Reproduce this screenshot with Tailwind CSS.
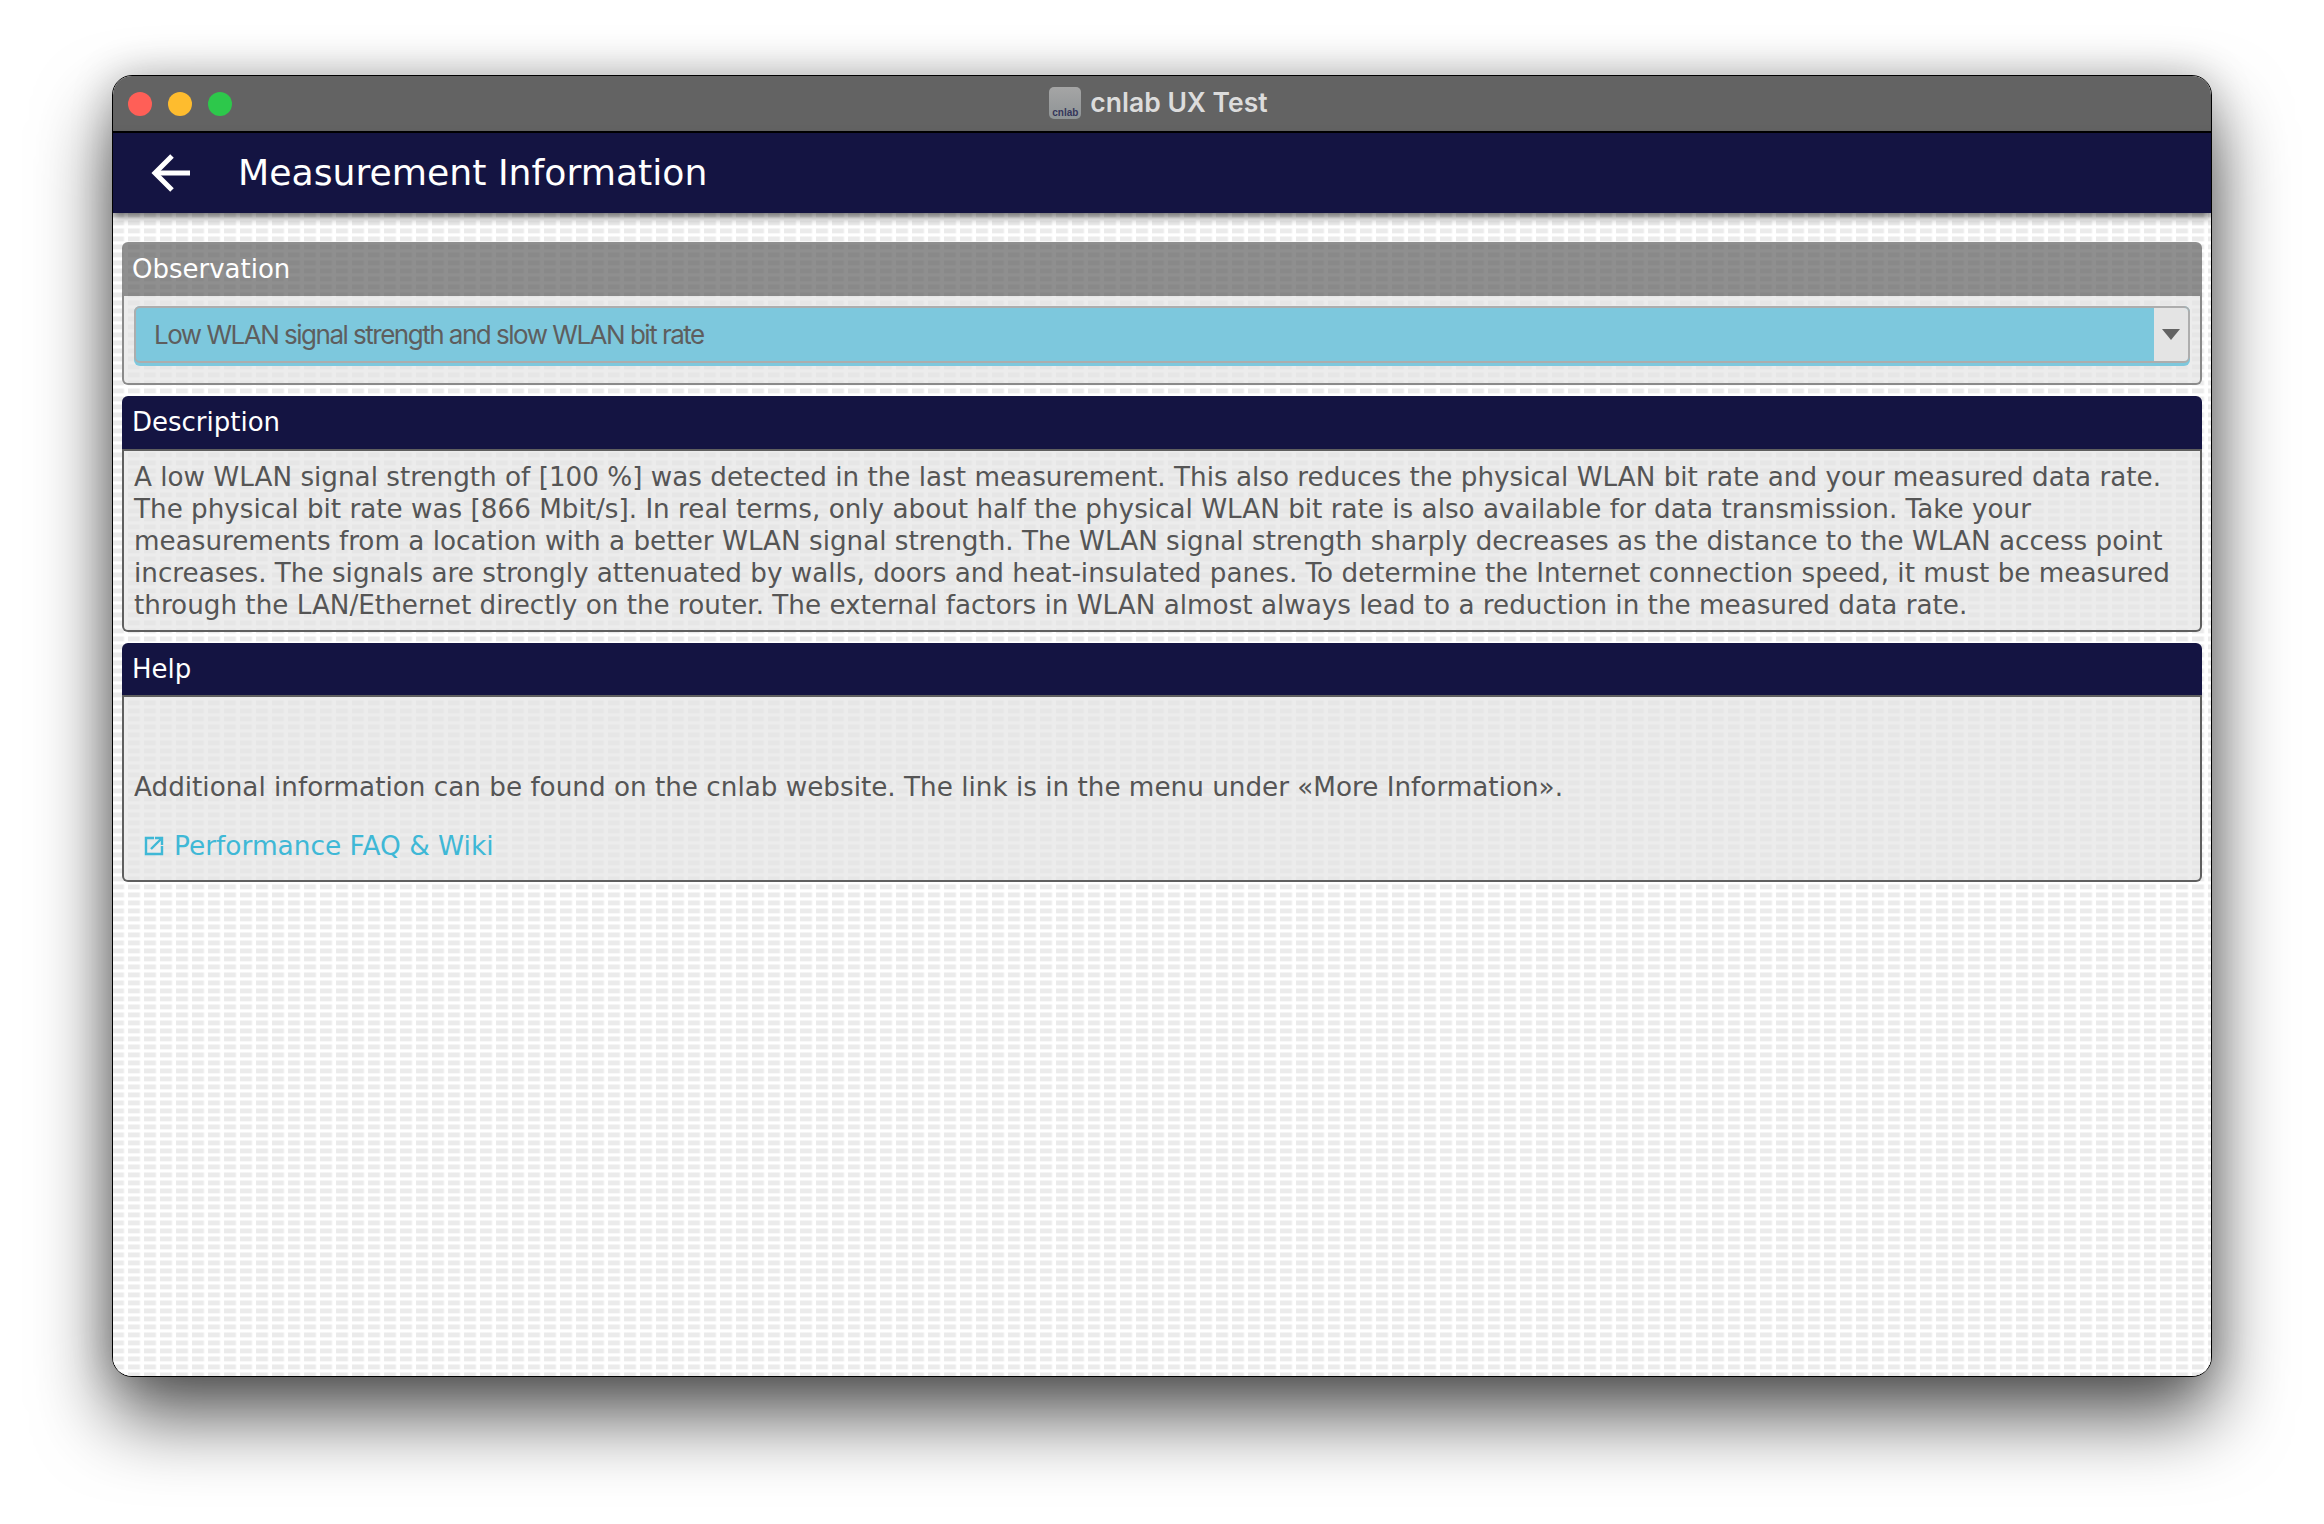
<!DOCTYPE html>
<html lang="en">

<head>
    <meta charset="UTF-8">
    <title>cnlab UX Test</title>
    <script src="https://cdn.jsdelivr.net/npm/@tailwindcss/browser@4"></script>
</head>

<body class="bg-white w-[2324px] h-[1524px] overflow-hidden pt-[75px] pl-[112px] font-['DejaVu_Sans',sans-serif]">

    <!-- Window -->
    <div class="w-[2100px] h-[1302px] rounded-[20px] border border-black overflow-hidden flex flex-col bg-white shadow-[0_40px_76px_rgba(0,0,0,0.66),0_0_40px_rgba(0,0,0,0.22)]">

        <!-- Title bar -->
        <div class="relative h-[57px] shrink-0 bg-[#636363] border-b-2 border-black flex items-center justify-center pr-[7px] pb-[2px]">
            <div class="absolute left-[15px] top-[16px] flex gap-[16px]">
                <span class="w-6 h-6 rounded-full bg-[#ff5f57]"></span>
                <span class="w-6 h-6 rounded-full bg-[#febc2e]"></span>
                <span class="w-6 h-6 rounded-full bg-[#2dc84b]"></span>
            </div>
            <div class="w-8 h-8 rounded-[5px] bg-linear-to-b from-[#a5a5a5] to-[#8f9496] flex items-end justify-center overflow-hidden">
                <span class="font-['Liberation_Sans',sans-serif] font-bold text-[10px] leading-[13px] text-[#34365a]">cnlab</span>
            </div>
            <span class="ml-[9px] font-['Inter',sans-serif] font-semibold text-[26.5px] text-[#dcdcdc]">cnlab UX Test</span>
        </div>

        <!-- App bar -->
        <header class="relative z-10 h-[80px] shrink-0 bg-[#141442] flex items-center shadow-[0_4px_8px_rgba(0,0,0,0.55)]">
            <svg class="ml-[38px] w-[40px] h-[40px]" viewBox="0 0 40 40" fill="none" stroke="white" stroke-width="5">
                <path d="M39 20H5" />
                <path d="M21 3L4 20L21 37" />
            </svg>
            <h1 class="ml-[47px] text-[36.2px] text-white">Measurement Information</h1>
        </header>

        <!-- Content -->
        <main class="flex-1 pl-[9px] pr-[9.5px] pt-[29px] flex flex-col gap-[11px] bg-[linear-gradient(to_bottom,transparent_3.5px,#fff_5px,#fff_7px,transparent_8px),linear-gradient(to_right,#ebebeb_11px,#fff_13px)] bg-size-[16px_8px] bg-position-[15px_0]">

            <!-- Observation -->
            <section>
                <div class="h-[54px] rounded-t-[6px] bg-[#606060]/70 flex items-center px-[10px] text-[26px] text-white">Observation</div>
                <div class="h-[89px] rounded-b-[6px] border-2 border-t-0 border-[#8a8a8a] bg-[#e4e4e4]/70 px-[10px] pt-[10px]">
                    <div class="h-[60px] rounded-[6px] bg-[#7dc8dd] pb-[3px]">
                        <div class="h-full rounded-[6px] border-2 border-[#adadad] flex items-stretch">
                            <div class="flex-1 flex items-center pl-[18px] font-['Inter',sans-serif] text-[26px] tracking-[-1.5px] text-[#5e5e5e]">Low WLAN signal strength and slow WLAN bit rate</div>
                            <div class="w-[34px] bg-[#e4e4e4] rounded-r-[4px] flex items-center justify-center">
                                <svg class="w-[18px] h-[11px]" viewBox="0 0 18 11" fill="#636363"><path d="M0 0H18L9 11Z" /></svg>
                            </div>
                        </div>
                    </div>
                </div>
            </section>

            <!-- Description -->
            <section>
                <div class="h-[55px] rounded-t-[6px] bg-[#141442] border-b-2 border-[#5f5f5f] flex items-center px-[10px] text-[26px] text-white">Description</div>
                <div class="h-[181px] rounded-b-[6px] border-2 border-t-0 border-[#5f5f5f] bg-[#e4e4e4]/70 pl-[10px] pt-[10px] text-[26.23px] leading-[32px] text-[#555555]">
                    A low WLAN signal strength of [100 %] was detected in the last measurement. This also reduces the physical WLAN bit rate and your measured data rate.<br>
                    The physical bit rate was [866 Mbit/s]. In real terms, only about half the physical WLAN bit rate is also available for data transmission. Take your<br>
                    measurements from a location with a better WLAN signal strength. The WLAN signal strength sharply decreases as the distance to the WLAN access point<br>
                    increases. The signals are strongly attenuated by walls, doors and heat-insulated panes. To determine the Internet connection speed, it must be measured<br>
                    through the LAN/Ethernet directly on the router. The external factors in WLAN almost always lead to a reduction in the measured data rate.
                </div>
            </section>

            <!-- Help -->
            <section>
                <div class="h-[54px] rounded-t-[6px] bg-[#141442] border-b-2 border-[#5f5f5f] flex items-center px-[10px] text-[26px] text-white">Help</div>
                <div class="h-[185px] rounded-b-[6px] border-2 border-t-0 border-[#5f5f5f] bg-[#e4e4e4]/70 pl-[10px] pt-[74px] text-[26.24px] leading-[32px] text-[#555555]">
                    <p>Additional information can be found on the cnlab website. The link is in the menu under «More Information».</p>
                    <a class="mt-[27px] ml-[10px] flex items-center gap-[10px] text-[26.4px] text-[#3fb8d6]">
                        <svg class="w-[20px] h-[20px]" viewBox="0 0 20 20" fill="none" stroke="#3fb8d6" stroke-width="2.4">
                            <path d="M10 2H2V18H18V10" />
                            <path d="M7 13L17 3M11 2H18V9" />
                        </svg>
                        <span>Performance FAQ &amp; Wiki</span>
                    </a>
                </div>
            </section>
        </main>
    </div>

</body>

</html>
